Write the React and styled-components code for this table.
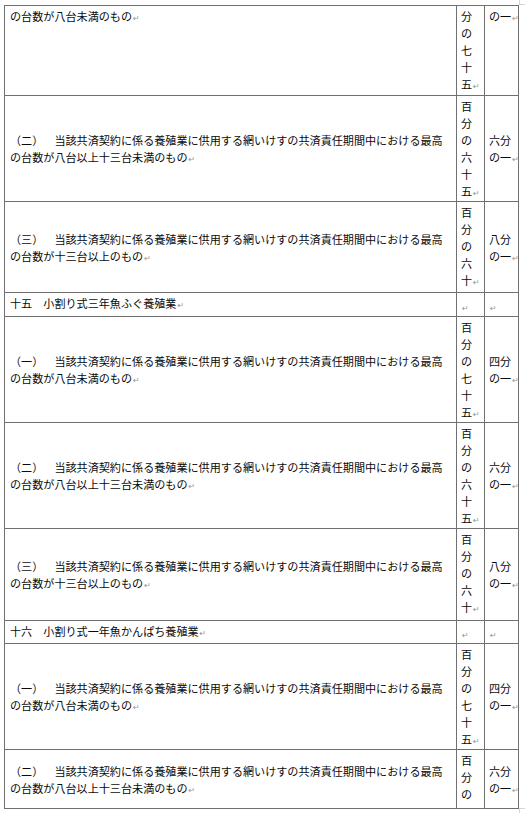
import React from 'react'
import styled, { createGlobalStyle } from 'styled-components'

const GlobalStyle = createGlobalStyle`
  html, body {
    margin: 0;
    padding: 0;
    background: #fff;
  }
  body {
    font-family: "Noto Sans CJK JP", "Noto Sans", sans-serif;
  }
`

const Page = styled.div`
  position: relative;
  width: 525px;
  height: 813px;
  box-sizing: border-box;
  padding: 5px 0 0 4px;
  overflow: hidden;
  background: #fff;
`

const Table = styled.table`
  border-collapse: collapse;
  table-layout: fixed;
  width: 514px;
  font-size: 11.1px;
  line-height: 17px;
  color: #0a0a0a;
  text-spacing-trim: space-all;
`

const Row = styled.tr`
  height: ${p => p.$h}px;
`

const Cell = styled.td`
  border: 1px solid #707070;
  padding: ${p => (p.$text ? '2px 7px 1px 5px' : '2px 2px 1px 4px')};
  vertical-align: ${p => p.$align || 'middle'};
  overflow: visible;
`

// Word's paragraph mark, drawn after the text without taking width
const Para = styled.span`
  ${p =>
    p.$mark &&
    `&::after {
      content: '↵';
      display: inline-block;
      width: 0;
      white-space: nowrap;
      font-family: "DejaVu Sans", sans-serif;
      font-size: 8px;
      line-height: 1;
      color: #939393;
      text-indent: 1px;
    }`}
`

const CropMark = styled.div`
  position: absolute;
  right: 0;
  width: 5px;
  height: 4px;
  border-left: 1px solid #d4d4d4;
  ${p => (p.$bottom ? 'bottom: 0; border-top: 1px solid #d4d4d4;' : 'top: 0; border-bottom: 1px solid #d4d4d4;')}
`

const rule = '当該共済契約に係る養殖業に供用する網いけすの共済責任期間中における最高の台数が'

const rows = [
  { h: 90, top: true, text: 'の台数が八台未満のもの', rate: '分の七十五', share: 'の一' },
  { h: 106, text: `（二）　${rule}八台以上十三台未満のもの`, rate: '百分の六十五', share: '六分の一' },
  { h: 91, text: `（三）　${rule}十三台以上のもの`, rate: '百分の六十', share: '八分の一' },
  { h: 24, head: true, text: '十五　小割り式三年魚ふぐ養殖業' },
  { h: 106, text: `（一）　${rule}八台未満のもの`, rate: '百分の七十五', share: '四分の一' },
  { h: 106, text: `（二）　${rule}八台以上十三台未満のもの`, rate: '百分の六十五', share: '六分の一' },
  { h: 92, text: `（三）　${rule}十三台以上のもの`, rate: '百分の六十', share: '八分の一' },
  { h: 23, head: true, text: '十六　小割り式一年魚かんぱち養殖業' },
  { h: 106, text: `（一）　${rule}八台未満のもの`, rate: '百分の七十五', share: '四分の一' },
  { h: 59, cut: true, text: `（二）　${rule}八台以上十三台未満のもの`, rate: '百分の', share: '六分の一' },
]

export default function App() {
  return (
    <Page>
      <GlobalStyle />
      <Table>
        <colgroup>
          <col style={{ width: 452 }} />
          <col style={{ width: 28 }} />
          <col style={{ width: 34 }} />
        </colgroup>
        <tbody>
          {rows.map((r, i) =>
            r.head ? (
              <Row key={i} $h={r.h}>
                <Cell $text $align="top"><Para $mark>{r.text}</Para></Cell>
                <Cell $align="bottom"><Para $mark /></Cell>
                <Cell $align="bottom"><Para $mark /></Cell>
              </Row>
            ) : (
              <Row key={i} $h={r.h}>
                <Cell $text $align={r.top ? 'top' : 'middle'}><Para $mark>{r.text}</Para></Cell>
                <Cell $align="top"><Para $mark={!r.cut}>{r.rate}</Para></Cell>
                <Cell $align={r.top ? 'top' : 'middle'}><Para $mark>{r.share}</Para></Cell>
              </Row>
            )
          )}
        </tbody>
      </Table>
      <CropMark />
      <CropMark $bottom />
    </Page>
  )
}
